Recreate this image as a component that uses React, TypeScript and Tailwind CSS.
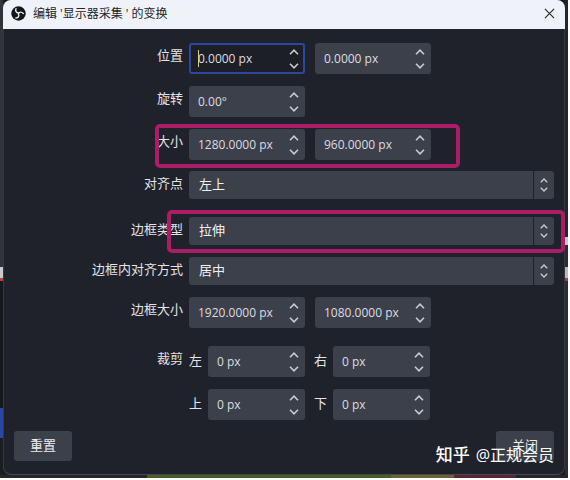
import React, { useState } from "react";

const LATIN = "font-['Open_Sans','Noto_Sans_CJK_SC',sans-serif]";

function Chevron({ up, small }: { up?: boolean; small?: boolean }) {
  return (
    <svg
      viewBox="0 0 10 6"
      className={small ? "h-[5px] w-2" : "h-[6px] w-[10px]"}
      fill="none"
      stroke="#c9cbd1"
      strokeWidth={small ? 1.7 : 1.6}
      aria-hidden="true"
    >
      <path d={up ? "M1 5.2 5 1.2 9 5.2" : "M1 .8 5 4.8 9 .8"} />
    </svg>
  );
}

interface SpinProps {
  id: string;
  value: string;
  label: string;
  active?: boolean;
  narrow?: boolean;
}

function Spin({ id, value, label, active, narrow }: SpinProps) {
  const [text, setText] = useState(value);
  return (
    <div
      className={`relative flex h-[31px] items-center rounded-[3px] border-2 pl-[7px] pr-1 ${
        narrow ? "w-[97px]" : "w-[116px]"
      } ${active ? "border-[#2c479f] bg-[#1d1f27]" : "border-[#3c404b] bg-[#3c404b]"}`}
    >
      {active && <span className="absolute left-[7px] top-[5px] h-[17px] w-px bg-[#d8cf8a]" />}
      <input
        id={id}
        aria-label={label}
        value={text}
        onChange={(e) => setText(e.target.value)}
        className="h-full w-0 min-w-0 flex-1 bg-transparent text-xs text-[#dcdde1] outline-none"
      />
      <div className="flex flex-col items-center gap-2">
        <button type="button" aria-label={`${label} +`} className="flex">
          <Chevron up />
        </button>
        <button type="button" aria-label={`${label} -`} className="flex">
          <Chevron />
        </button>
      </div>
    </div>
  );
}

function Pick({ id, options }: { id: string; options: string[] }) {
  return (
    <div className="flex h-7 flex-1 overflow-hidden rounded-[3px] bg-[#3c404b]">
      <select
        id={id}
        className="min-w-0 flex-1 appearance-none bg-transparent pl-[10px] text-[13px] text-[#f0f0f2] outline-none"
      >
        {options.map((o) => (
          <option key={o}>{o}</option>
        ))}
      </select>
      <span className="flex w-[21px] flex-col items-center justify-center gap-1 border-l border-[#1f222b]">
        <Chevron up small />
        <Chevron small />
      </span>
    </div>
  );
}

interface RowProps {
  label: string;
  htmlFor: string;
  raised?: boolean;
  gap?: "tight" | "wide";
  children: React.ReactNode;
}

function Row({ label, htmlFor, raised, gap, children }: RowProps) {
  const margin = gap === "wide" ? "mt-[18px]" : gap === "tight" ? "mt-[11px]" : "mt-3";
  return (
    <div className={`flex items-center gap-[6px] ${margin}`}>
      <label
        htmlFor={htmlFor}
        className={`w-[180px] shrink-0 text-right text-[13px] leading-5 text-[#e4e4e6] ${raised ? "pb-2" : "pb-1"}`}
      >
        {label}
      </label>
      {children}
    </div>
  );
}

function CropCell({ id, label }: { id: string; label: string }) {
  return (
    <div className="flex items-center gap-[6px]">
      <label htmlFor={id} className="w-[13px] pb-1 text-[13px] leading-5 text-[#e4e4e6]">
        {label}
      </label>
      <Spin id={id} label={label} value="0 px" narrow />
    </div>
  );
}

export default function App() {
  return (
    <div className={`min-h-screen bg-white pb-[2px] pr-[2px] ${LATIN}`}>
      <div className="relative flex bg-[#17191f]">
        <div className="flex w-[3px] flex-col bg-[#2a2c33]" aria-hidden="true">
          <div className="h-[267px] bg-[#30333a]" />
          <div className="h-[11px] bg-[#c9cac9]" />
          <div className="h-[3px] bg-[#b5433f]" />
          <div className="h-[127px] bg-[#16181e]" />
          <div className="h-[30px] bg-[#2b47a4]" />
          <div className="flex-1 bg-[#1b1d23]" />
        </div>

        <main className="min-w-0 flex-1 overflow-hidden rounded-lg border-b border-[#454850] bg-[#1f222b] shadow-[inset_1px_0_#353840,inset_-1px_0_#353840]">
          <header className="flex h-[29px] items-center bg-[#eff3f9] pb-[2px] pl-2 pr-[10px]">
            <svg viewBox="0 0 16 16" className="size-[15px]" aria-hidden="true">
              <circle cx="8" cy="8" r="7.7" fill="#15161a" />
              <g fill="none" stroke="#e9ecf1" strokeWidth="1.5" strokeLinecap="round">
                <path d="M5.3 2.8C4.4 5.3 5.6 7.2 8 7.4" />
                <path d="M13.1 8C11.3 6 9.1 6.1 8 7.9" />
                <path d="M5.2 12.8C7.8 12.6 9 10.8 8 8.7" />
              </g>
            </svg>
            <h1 className="ml-[7px] flex-1 whitespace-pre text-xs text-[#222429]">
              编辑 '显示器采集 ' 的变换
            </h1>
            <button type="button" aria-label="关闭窗口" className="flex">
              <svg viewBox="0 0 12 12" className="size-[11px]" stroke="#222429" strokeWidth="1.2" aria-hidden="true">
                <path d="M1 1 11 11M11 1 1 11" />
              </svg>
            </button>
          </header>

          <form className="pb-[13px] pr-[11px] pt-[2px]" onSubmit={(e) => e.preventDefault()}>
            <Row label="位置" htmlFor="pos-x" raised>
              <div className="flex gap-[10px]">
                <Spin id="pos-x" label="位置 X" value="0.0000 px" active />
                <Spin id="pos-y" label="位置 Y" value="0.0000 px" />
              </div>
            </Row>
            <Row label="旋转" htmlFor="rotation" raised>
              <Spin id="rotation" label="旋转" value="0.00°" />
            </Row>
            <Row label="大小" htmlFor="width" raised>
              <div className="flex gap-[10px]">
                <Spin id="width" label="宽度" value="1280.0000 px" />
                <Spin id="height" label="高度" value="960.0000 px" />
              </div>
            </Row>
            <Row label="对齐点" htmlFor="align" gap="tight">
              <Pick id="align" options={["左上", "居中"]} />
            </Row>
            <Row label="边框类型" htmlFor="bounds-type" gap="wide">
              <Pick id="bounds-type" options={["拉伸"]} />
            </Row>
            <Row label="边框内对齐方式" htmlFor="bounds-align">
              <Pick id="bounds-align" options={["居中", "左上"]} />
            </Row>
            <Row label="边框大小" htmlFor="bounds-w" raised>
              <div className="flex gap-[10px]">
                <Spin id="bounds-w" label="边框宽度" value="1920.0000 px" />
                <Spin id="bounds-h" label="边框高度" value="1080.0000 px" />
              </div>
            </Row>
            <Row label="裁剪" htmlFor="crop-left" raised gap="wide">
              <div className="flex gap-[9px]">
                <CropCell id="crop-left" label="左" />
                <CropCell id="crop-right" label="右" />
              </div>
            </Row>
            <div className="ml-[186px] mt-3 flex gap-[9px]">
              <CropCell id="crop-top" label="上" />
              <CropCell id="crop-bottom" label="下" />
            </div>

            <footer className="mt-[11px] flex justify-between pl-[11px] text-[13px] text-[#ededf0]">
              <button type="button" className="h-[30px] w-[58px] rounded-[3px] bg-[#3c404b]">
                重置
              </button>
              <button type="button" className="h-[30px] w-[58px] rounded-[3px] bg-[#3c404b]">
                关闭
              </button>
            </footer>
          </form>
        </main>

        <div className="flex w-[3px] flex-col bg-[#24262c]" aria-hidden="true">
          <div className="h-[237px] bg-[#24262c]" />
          <div className="h-2 bg-[#c4c5c8]" />
          <div className="h-[22px] bg-[#2b2d33]" />
          <div className="h-[11px] bg-[#b9b9b9]" />
          <div className="h-[3px] bg-[#a5403c]" />
          <div className="flex-1 bg-[#2b2d34]" />
        </div>

        <div className="pointer-events-none absolute left-[155px] top-[124px] h-11 w-[305px] rounded-[5px] border-4 border-[#ab1d66]" />
        <div className="pointer-events-none absolute left-[167px] right-[3px] top-[210px] h-[43px] rounded-[5px] border-4 border-[#ab1d66]" />
        <div className="pointer-events-none absolute bottom-[8px] right-[14px] flex items-center gap-[6px] whitespace-nowrap leading-6 text-white">
          <span className="text-[17px] font-medium">知乎</span>
          <span className="text-base">@正规会员</span>
        </div>
      </div>
      <div className="flex h-[3px] bg-[#26272c]" aria-hidden="true">
        <div className="w-[147px]" />
        <div className="flex-1 bg-[#45602b]" />
        <div className="w-[63px] bg-[#6a6432]" />
        <div className="w-[62px] bg-[#57292d]" />
        <div className="w-[52px]" />
      </div>
    </div>
  );
}
